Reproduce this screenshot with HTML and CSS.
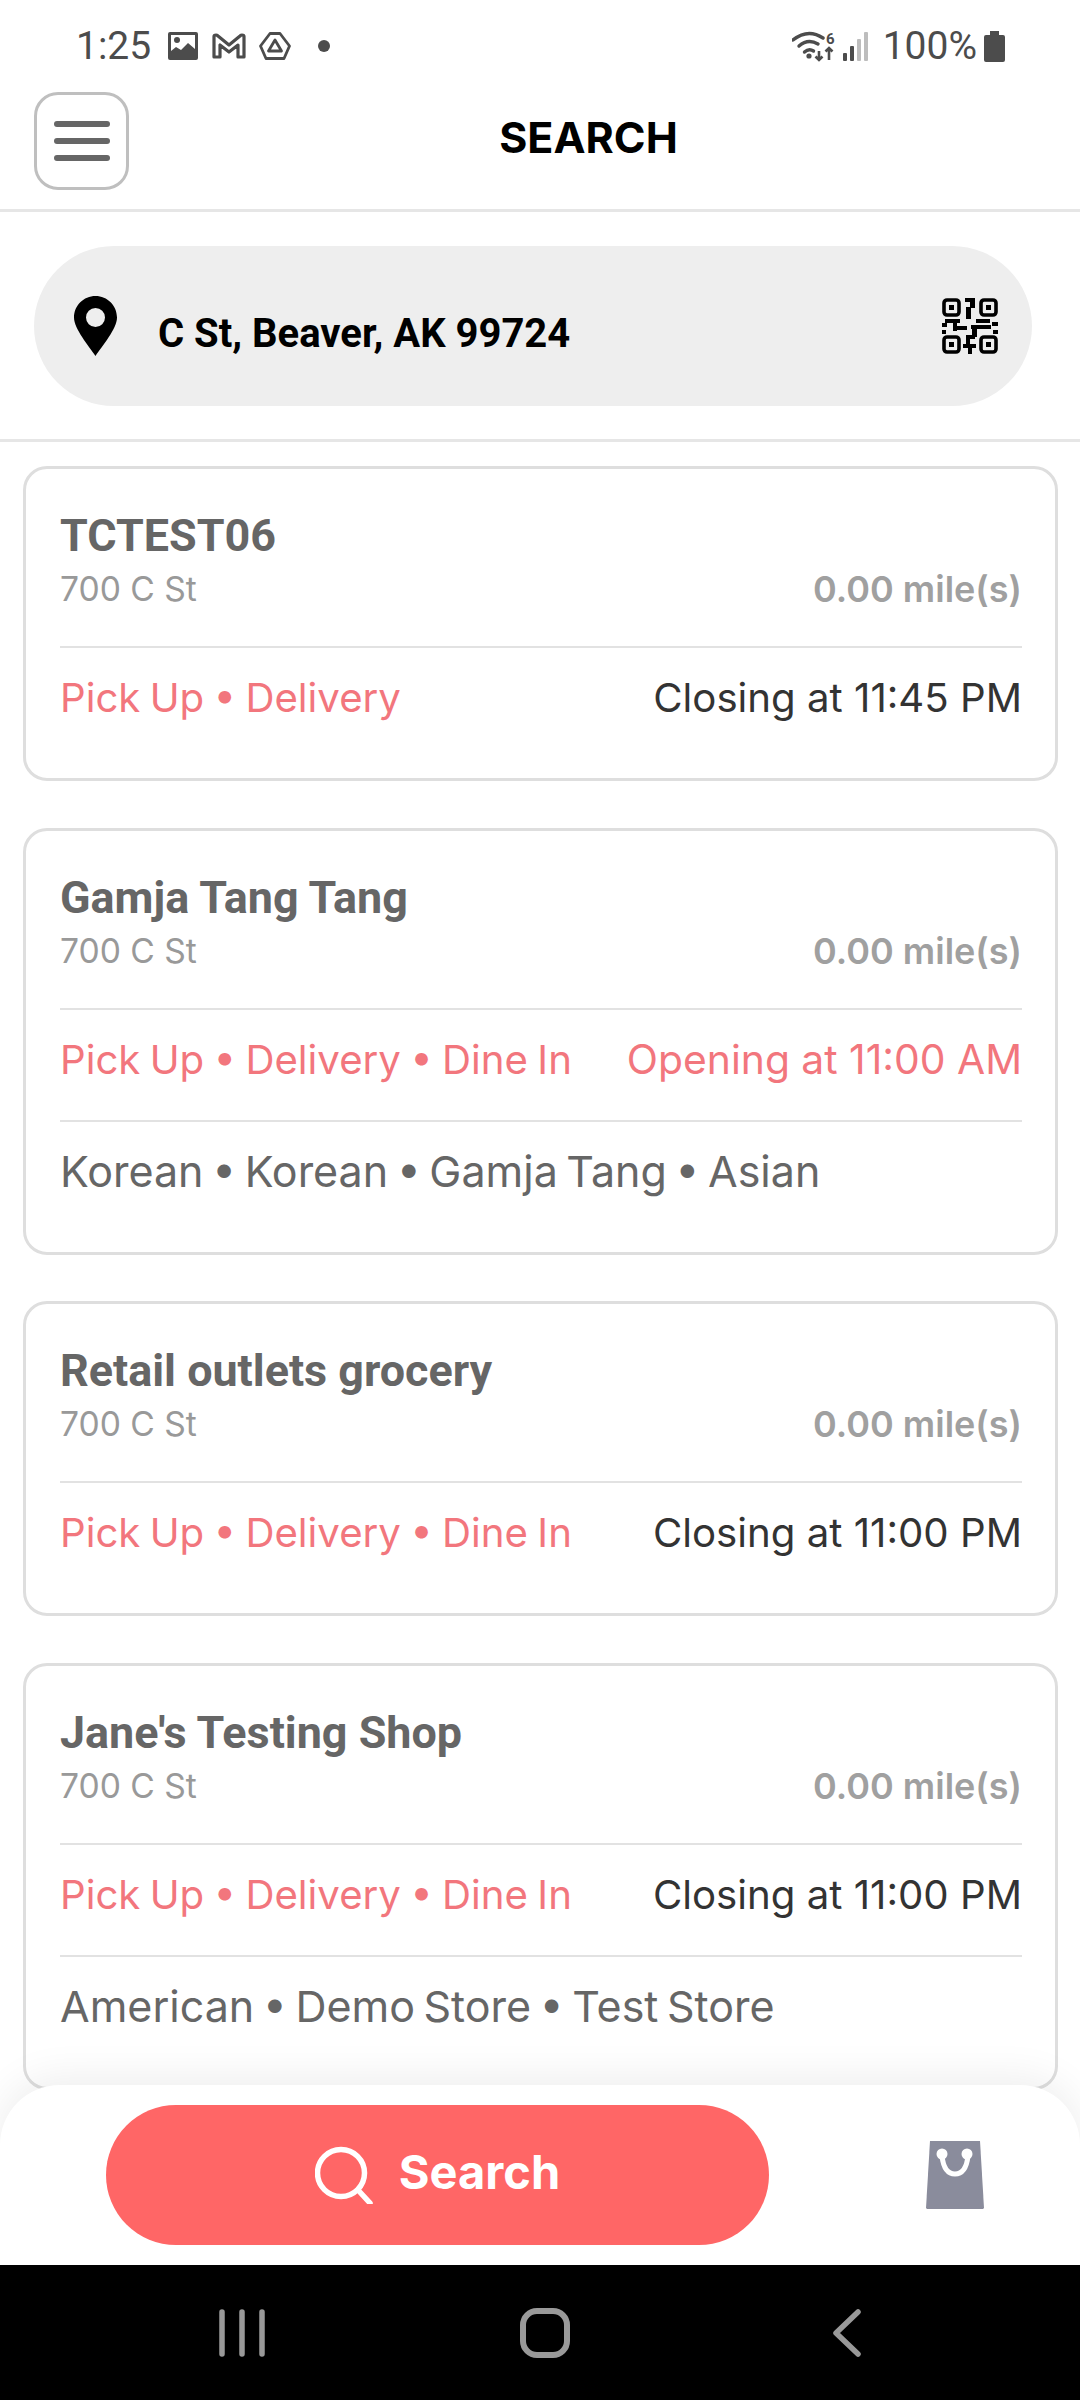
FILE: index.html
```html
<!DOCTYPE html>
<html lang="en">
<head>
  <meta charset="UTF-8" />
  <meta name="viewport" content="width=device-width, initial-scale=1.0"/>
  <title>Search</title>
  <link rel="stylesheet" href="styles.css">
</head>
<body>
  <div class="screen">
    <div class="status">
      <span class="clock">1:25</span>
      <svg class="ic-photo" width="30" height="28" viewBox="0 0 30 28"><path fill="#4c4c4c" fill-rule="evenodd" d="M2 0h26a2 2 0 0 1 2 2v24a2 2 0 0 1-2 2H2a2 2 0 0 1-2-2V2a2 2 0 0 1 2-2zM3 3v16l5-4 5 3 7-7 7 6V3z"/><circle cx="9" cy="8" r="3" fill="#4c4c4c"/></svg>
      <svg class="ic-mail" width="34" height="26" viewBox="0 0 34 26"><path fill="none" stroke="#4c4c4c" stroke-width="3.2" stroke-linejoin="round" d="M2 24V3.500Q2 2 4 2q1 0 2 1l11 9 11-9q1-1 2-1 2 0 2 1.500V24h-6V12l-9 7-9-7v12z"/></svg>
      <svg class="ic-drive" width="32" height="28" viewBox="0 0 32 28"><path fill="none" stroke="#4c4c4c" stroke-width="2.800" stroke-linejoin="round" d="M11 1.500h10L30.500 14 25 26.500H7L1.500 14z"/><path fill="none" stroke="#4c4c4c" stroke-width="2.800" stroke-linejoin="round" d="M16 8l6.500 11h-13z"/></svg>
      <span class="dot"></span>
      <span class="status-gap"></span>
      <svg class="ic-wifi" width="44" height="32" viewBox="0 0 44 32"><g fill="none" stroke="#4c4c4c" stroke-width="3.400" stroke-linecap="round"><path d="M1 10Q16-2 31 8"/><path d="M7 16Q16 8 26 14"/><path d="M12.500 22Q17 18 21.500 21"/></g><circle cx="17" cy="26" r="2.600" fill="#4c4c4c"/><text x="34" y="14" class="wifi-six">6</text><path fill="none" stroke="#4c4c4c" stroke-width="2.600" d="M27 21v9M23.500 26.500L27 30l3.500-3.500M37 30v-12M33.500 21.500L37 18l3.500 3.500"/></svg>
      <svg class="ic-signal" width="27" height="29" viewBox="0 0 27 29"><rect x="0" y="21" width="4" height="8" rx="1" fill="#4c4c4c"/><rect x="7" y="14" width="4" height="15" rx="1" fill="#4c4c4c"/><rect x="14" y="7" width="4" height="22" rx="1" fill="#bdbdbd"/><rect x="21" y="0" width="4" height="29" rx="1" fill="#bdbdbd"/></svg>
      <span class="battery-text">100%</span>
      <svg class="ic-battery" width="21" height="31" viewBox="0 0 21 31"><path fill="#4c4c4c" d="M6 0h9v4h4a2 2 0 0 1 2 2v23a2 2 0 0 1-2 2H2a2 2 0 0 1-2-2V6a2 2 0 0 1 2-2h4z"/></svg>
    </div>

    <header class="topbar">
      <button class="menu-btn">
        <span></span><span></span><span></span>
      </button>
      <h1 class="page-title">SEARCH</h1>
    </header>

    <div class="address-wrap">
      <div class="address">
        <svg class="pin" width="43" height="60" viewBox="0 0 43 60"><path fill="#000" fill-rule="evenodd" d="M21.500 0C9.600 0 0 9.600 0 21.500 0 33 15 50 21.500 60 28 50 43 33 43 21.500 43 9.600 33.400 0 21.500 0zm0 12a9.500 9.500 0 1 1 0 19 9.500 9.500 0 0 1 0-19z"/></svg>
        <span class="address-text">C St, Beaver, AK 99724</span>
        <svg class="qr" width="56" height="56" viewBox="0 0 56 56">
          <g fill="none" stroke="#000" stroke-width="3.600">
            <rect x="2" y="2" width="15" height="15" rx="3"/>
            <rect x="39" y="2" width="15" height="15" rx="3"/>
            <rect x="2" y="39" width="15" height="15" rx="3"/>
            <rect x="39" y="39" width="15" height="15" rx="3"/>
          </g>
          <g fill="#000">
            <rect x="7" y="7" width="5" height="5"/><rect x="44" y="7" width="5" height="5"/>
            <rect x="7" y="44" width="5" height="5"/><rect x="44" y="44" width="5" height="5"/>
            <rect x="23" y="0" width="10" height="4"/><rect x="28" y="4" width="5" height="6"/><rect x="24" y="9" width="5" height="12"/>
            <rect x="3" y="21" width="15" height="4"/><rect x="0" y="25" width="5" height="4"/><rect x="0" y="32" width="4" height="4"/>
            <rect x="11" y="25" width="4" height="8"/><rect x="15" y="28" width="10" height="4"/>
            <rect x="34" y="21" width="14" height="4"/><rect x="29" y="27" width="20" height="4"/><rect x="50" y="24" width="6" height="4"/><rect x="51" y="32" width="5" height="4"/>
            <rect x="30" y="31" width="5" height="8"/><rect x="24" y="37" width="9" height="4"/>
            <rect x="24" y="41" width="4" height="6"/><rect x="21" y="46" width="13" height="4"/><rect x="26" y="50" width="4" height="6"/>
          </g>
        </svg>
      </div>
    </div>

    <main class="results">
      <div class="card-list">
        <article class="card">
          <div class="card-head">
            <h2 class="shop-name">TCTEST06</h2>
            <div class="shop-sub"><span class="shop-addr">700 C St</span><span class="shop-dist">0.00 mile(s)</span></div>
          </div>
          <div class="card-row">
            <span class="coral">Pick Up • Delivery</span>
            <span class="hours">Closing at 11:45 PM</span>
          </div>
        </article>

        <article class="card">
          <div class="card-head">
            <h2 class="shop-name">Gamja Tang Tang</h2>
            <div class="shop-sub"><span class="shop-addr">700 C St</span><span class="shop-dist">0.00 mile(s)</span></div>
          </div>
          <div class="card-row">
            <span class="coral">Pick Up • Delivery • Dine In</span>
            <span class="coral opening">Opening at 11:00 AM</span>
          </div>
          <div class="card-row tags">Korean • Korean • Gamja Tang • Asian</div>
        </article>

        <article class="card">
          <div class="card-head">
            <h2 class="shop-name">Retail outlets grocery</h2>
            <div class="shop-sub"><span class="shop-addr">700 C St</span><span class="shop-dist">0.00 mile(s)</span></div>
          </div>
          <div class="card-row">
            <span class="coral">Pick Up • Delivery • Dine In</span>
            <span class="hours">Closing at 11:00 PM</span>
          </div>
        </article>

        <article class="card">
          <div class="card-head">
            <h2 class="shop-name">Jane's Testing Shop</h2>
            <div class="shop-sub"><span class="shop-addr">700 C St</span><span class="shop-dist">0.00 mile(s)</span></div>
          </div>
          <div class="card-row">
            <span class="coral">Pick Up • Delivery • Dine In</span>
            <span class="hours">Closing at 11:00 PM</span>
          </div>
          <div class="card-row tags">American • Demo Store • Test Store</div>
        </article>
      </div>

      <div class="dock">
        <button class="search-btn">
          <svg width="58" height="58" viewBox="0 0 58 58"><circle cx="26" cy="27" r="23.500" fill="none" stroke="#fff" stroke-width="5.500"/><path d="M43 44l12 13" fill="none" stroke="#fff" stroke-width="5.500" stroke-linecap="round"/></svg>
          <span class="search-label">Search</span>
        </button>
        <svg class="bag" width="58" height="68" viewBox="0 0 58 68"><path fill="#8a8c9c" d="M4 0h50l4 67-1 1H1l-1-1z"/><path fill="none" stroke="#fff" stroke-width="5" stroke-linecap="round" d="M16 15q2 18 13 18t13-18"/><circle cx="16" cy="13" r="5.500" fill="#fff"/><circle cx="41" cy="13" r="5.500" fill="#fff"/></svg>
      </div>
    </main>

    <nav class="softkeys">
      <svg width="46" height="48" viewBox="0 0 46 48"><g stroke="#999" stroke-width="5.500" stroke-linecap="round"><path d="M3 3v42M23 3v42M43 3v42"/></g></svg>
      <svg class="key-home" width="50" height="50" viewBox="0 0 50 50"><rect x="3" y="3" width="44" height="44" rx="14" fill="none" stroke="#999" stroke-width="6"/></svg>
      <svg class="key-back" width="30" height="48" viewBox="0 0 30 48"><path d="M26 3L4 24l22 21" fill="none" stroke="#999" stroke-width="5.500" stroke-linecap="round" stroke-linejoin="round"/></svg>
    </nav>
  </div>
</body>
</html>
```

FILE: styles.css
```css
* {
  box-sizing: border-box;
}

body {
  margin: 0;
  background: #fff;
  font-family: 'Inter', 'Open Sans', sans-serif;
}

.screen {
  width: 1080px;
  height: 2400px;
  display: flex;
  flex-direction: column;
  overflow: hidden;
}

/* status bar */
.status {
  height: 92px;
  flex: none;
  display: flex;
  align-items: center;
  padding: 0 75px 0 76px;
  color: #4c4c4c;
  font-family: 'Roboto', sans-serif;
}

.clock {
  font-size: 39px;
  width: 92px;
}

.ic-mail {
  margin-left: 14px;
}

.ic-drive {
  margin-left: 13px;
}

.dot {
  width: 12px;
  height: 12px;
  border-radius: 50%;
  background: #4c4c4c;
  margin-left: 27px;
}

.status-gap {
  flex: 1;
}

.wifi-six {
  font: bold 15px 'Roboto', sans-serif;
  fill: #4c4c4c;
}

.ic-signal {
  margin-left: 7px;
}

.battery-text {
  font-size: 39px;
  margin-left: 13px;
}

.ic-battery {
  margin-left: 7px;
}

/* top bar */
.topbar {
  height: 120px;
  flex: none;
  display: flex;
  align-items: flex-start;
  padding-left: 34px;
  border-bottom: 3px solid #e6e6e6;
}

.menu-btn {
  width: 95px;
  height: 98px;
  flex: none;
  background: #fff;
  border: 3px solid #bfbfbf;
  border-radius: 24px;
  display: flex;
  flex-direction: column;
  align-items: center;
  justify-content: center;
  gap: 11px;
  padding: 0;
}

.menu-btn span {
  width: 56px;
  height: 6px;
  border-radius: 3px;
  background: #666;
}

.page-title {
  flex: 1;
  margin: 0;
  padding-right: 32px;
  text-align: center;
  font-size: 43px;
  font-weight: 700;
  line-height: 90px;
  color: #000;
}

/* address */
.address-wrap {
  flex: none;
  height: 230px;
  padding: 34px 48px 0 34px;
  border-bottom: 3px solid #e6e6e6;
}

.address {
  height: 160px;
  display: flex;
  align-items: center;
  padding: 0 34px 0 40px;
  background: #eee;
  border-radius: 80px;
}

.pin {
  flex: none;
}

.address-text {
  flex: 1;
  margin-left: 41px;
  padding-top: 14px;
  font-family: 'Roboto', sans-serif;
  font-size: 40px;
  font-weight: 700;
  color: #000;
}

.qr {
  flex: none;
}

/* results */
.results {
  flex: 1;
  position: relative;
  overflow: hidden;
}

.card-list {
  display: flex;
  flex-direction: column;
  gap: 46.5px;
  padding: 24px 22px 0 23px;
}

.card {
  flex: none;
  border: 3px solid #dedede;
  border-radius: 24px;
  padding: 0 33px 20px 34px;
}

.card-head {
  padding-top: 41px;
  height: 177px;
}

.shop-name {
  margin: 0;
  font-family: 'Roboto', sans-serif;
  font-size: 44.9px;
  font-weight: 700;
  line-height: 52px;
  color: #666;
}

.shop-sub {
  display: flex;
  justify-content: space-between;
  align-items: center;
  line-height: 52px;
  margin-top: 1px;
}

.shop-addr {
  font-size: 33.6px;
  color: #999;
}

.shop-dist {
  font-size: 36px;
  font-weight: 600;
  color: #a0a0a0;
}

.card-row {
  height: 112px;
  padding-bottom: 11px;
  display: flex;
  justify-content: space-between;
  align-items: center;
  border-top: 2px solid #e2e2e2;
  font-size: 40.2px;
  word-spacing: -2px;
}

.coral {
  color: #f2767d;
}

.opening {
  font-size: 40.8px;
  word-spacing: 0;
}

.hours {
  font-size: 40.2px;
  word-spacing: 0;
  color: #333;
}

.tags {
  font-size: 43px;
  word-spacing: -3.6px;
  color: #666;
}

/* bottom dock sits over the list */
.dock {
  position: absolute;
  left: 0;
  right: 0;
  bottom: 0;
  height: 180px;
  display: flex;
  align-items: center;
  padding: 0 96px 0 106px;
  justify-content: space-between;
  background: #fff;
  border-radius: 60px 60px 0 0;
  box-shadow: 0 -8px 40px rgba(0, 0, 0, 0.07);
}

.search-btn {
  width: 663px;
  height: 140px;
  display: flex;
  align-items: center;
  justify-content: center;
  gap: 26px;
  border: none;
  border-radius: 70px;
  background: #ff6666;
  color: #fff;
  font-family: 'Inter', sans-serif;
  font-size: 47px;
  font-weight: 700;
}

.search-label {
  padding-bottom: 8px;
}

.bag {
  flex: none;
}

/* android keys */
.softkeys {
  height: 135px;
  flex: none;
  background: #000;
  display: flex;
  align-items: center;
  padding-left: 219px;
}

.key-home {
  margin-left: 255px;
}

.key-back {
  margin-left: 262px;
}
```
